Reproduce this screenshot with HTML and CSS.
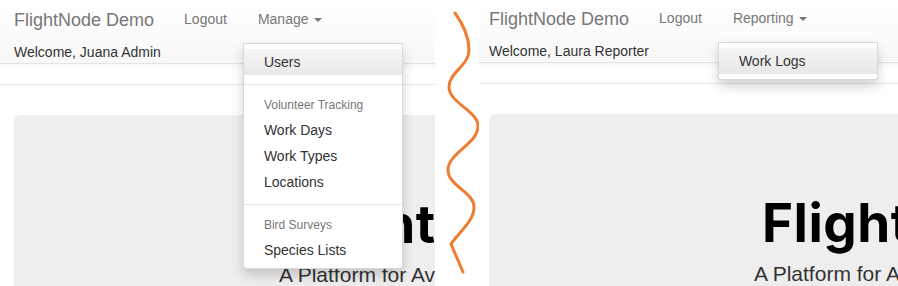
FILE: index.html
```html
<!DOCTYPE html>
<html lang="en">
<head>
<meta charset="utf-8">
<title>FlightNode Demo</title>
<link rel="stylesheet" href="styles.css">
</head>
<body>
<div class="stage">
  <section class="panel panel-left">
    <div class="page">
      <nav class="navbar">
        <div class="nav-top">
          <a class="brand">FlightNode Demo</a>
          <ul class="nav">
            <li class="nav-item"><a class="nav-link">Logout</a></li>
            <li class="nav-item">
              <a class="nav-link">Manage <span class="caret"></span></a>
              <ul class="menu">
                <li><a class="menu-item active">Users</a></li>
                <li class="menu-divider"></li>
                <li class="menu-header">Volunteer Tracking</li>
                <li><a class="menu-item">Work Days</a></li>
                <li><a class="menu-item">Work Types</a></li>
                <li><a class="menu-item">Locations</a></li>
                <li class="menu-divider"></li>
                <li class="menu-header">Bird Surveys</li>
                <li><a class="menu-item">Species Lists</a></li>
              </ul>
            </li>
          </ul>
        </div>
        <div class="welcome">Welcome, Juana Admin</div>
      </nav>
      <div class="subbar"></div>
      <div class="jumbotron">
        <h1 class="hero-title">FlightNode</h1>
        <p class="hero-sub">A Platform for Avian Data Collection</p>
      </div>
    </div>
  </section>

  <div class="gap">
    <svg class="wave" width="44" height="286" viewBox="0 0 44 286">
      <path d="M20,13 C28,24 34,37 34,50 C34,66 14,72 14,87 C14,103 43,111 43,126 C43,144 13,153 13,170 C13,186 39,192 39,207 C39,221 26,230 16,244 L28,272" />
    </svg>
  </div>

  <section class="panel panel-right">
    <div class="page">
      <nav class="navbar">
        <div class="nav-top">
          <a class="brand">FlightNode Demo</a>
          <ul class="nav">
            <li class="nav-item"><a class="nav-link">Logout</a></li>
            <li class="nav-item">
              <a class="nav-link">Reporting <span class="caret"></span></a>
              <ul class="menu">
                <li><a class="menu-item active">Work Logs</a></li>
              </ul>
            </li>
          </ul>
        </div>
        <div class="welcome">Welcome, Laura Reporter</div>
      </nav>
      <div class="subbar"></div>
      <div class="jumbotron">
        <h1 class="hero-title">FlightNode</h1>
        <p class="hero-sub">A Platform for Avian Data Collection</p>
      </div>
    </div>
  </section>
</div>
</body>
</html>
```
FILE: styles.css
```css
* {
  box-sizing: border-box;
  margin: 0;
  padding: 0;
}

html, body {
  width: 898px;
  height: 286px;
  overflow: hidden;
  background: #fff;
}

body {
  font-family: "Liberation Sans", Arial, sans-serif;
  font-size: 14px;
  line-height: 20px;
  color: #333;
}

.stage {
  display: flex;
  height: 286px;
}

.panel {
  position: relative;
  overflow: hidden;
  height: 286px;
  flex: none;
}

.panel-left {
  width: 435px;
}

.panel-right {
  width: 419px;
}

.gap {
  width: 44px;
  flex: none;
}

.wave {
  display: block;
}

.wave path {
  fill: none;
  stroke: #ef7d31;
  stroke-width: 3;
  stroke-linecap: round;
  stroke-linejoin: miter;
}

.page {
  width: 900px;
}

.panel-right .page {
  margin: -1px 0 0 -4px;
}

.navbar {
  position: relative;
  z-index: 2;
  height: 64px;
  background: linear-gradient(to bottom, #fff 0, #f8f8f8 100%);
  border-bottom: 1px solid #e4e4e4;
  box-shadow: 0 1px 5px rgba(0, 0, 0, .05);
}

.nav-top {
  display: flex;
  height: 42px;
}

.brand {
  display: block;
  padding: 10px 15px 0 14px;
  font-size: 18px;
  line-height: 20px;
  color: #777;
}

.nav {
  display: flex;
  list-style: none;
}

.nav-item {
  position: relative;
}

.nav-item + .nav-item {
  margin-left: 1px;
}

.nav-link {
  display: block;
  padding: 9px 15px 0;
  line-height: 20px;
  color: #777;
}

.caret {
  display: inline-block;
  width: 0;
  height: 0;
  margin-left: 2px;
  vertical-align: middle;
  border-top: 4px solid #777;
  border-left: 4px solid transparent;
  border-right: 4px solid transparent;
}

.welcome {
  padding-left: 14px;
  line-height: 20px;
  color: #333;
}

.menu {
  position: absolute;
  top: 43px;
  left: 0;
  width: 160px;
  padding: 5px 0;
  list-style: none;
  background: #fff;
  border: 1px solid rgba(0, 0, 0, .15);
  border-radius: 0 0 4px 4px;
  box-shadow: 0 6px 12px rgba(0, 0, 0, .175);
  z-index: 10;
}

.menu-item {
  display: block;
  padding: 3px 20px;
  line-height: 20px;
  color: #333;
  white-space: nowrap;
}

.menu-item.active {
  background: linear-gradient(to bottom, #f5f5f5 0, #e8e8e8 100%);
}

.menu-header {
  padding: 3px 20px;
  font-size: 12px;
  line-height: 17px;
  color: #777;
}

.menu-divider {
  height: 1px;
  margin: 9px 0;
  background: #e5e5e5;
}

.subbar {
  height: 21px;
  border-bottom: 1px solid #e5e5e5;
}

.jumbotron {
  width: 886px;
  height: 220px;
  margin: 30px 0 0 14px;
  background: #eee;
  border-radius: 6px;
  padding-top: 83px;
  white-space: nowrap;
}

.hero-title {
  margin-left: 273px;
  font-family: Inter, "Open Sans", sans-serif;
  font-weight: 700;
  font-size: 53px;
  line-height: 53px;
  letter-spacing: 0.5px;
  color: #000;
}

.hero-sub {
  margin: 13px 0 0 265px;
  font-size: 21px;
  line-height: 21px;
  color: #333;
}
```
